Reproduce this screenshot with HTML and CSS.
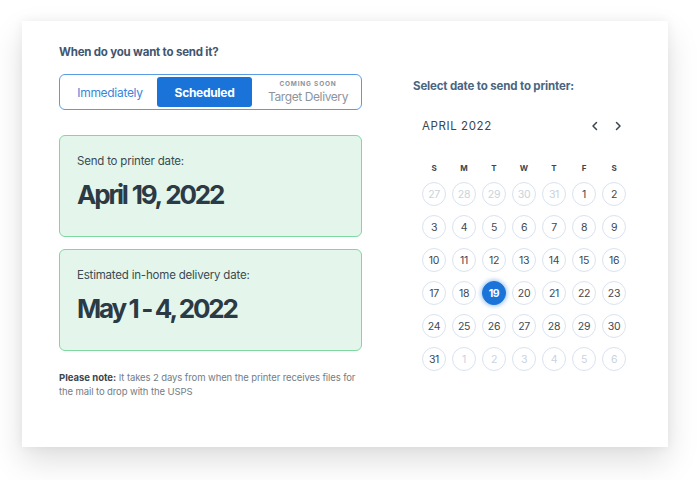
FILE: index.html
```html
<!DOCTYPE html>
<html>
<head>
<meta charset="utf-8">
<link rel="stylesheet" href="styles.css">
</head>
<body>
<div class="card">
  <div class="left">
    <h2 class="q">When do you want to send it?</h2>
    <div class="toggle">
      <div class="opt opt-imm">Immediately</div>
      <div class="opt opt-sel">Scheduled</div>
      <div class="opt opt-soon">
        <span class="soon">COMING SOON</span>
        <span class="target">Target Delivery</span>
      </div>
    </div>
    <div class="datebox">
      <div class="dl">Send to printer date:</div>
      <div class="dv">April 19, 2022</div>
    </div>
    <div class="datebox">
      <div class="dl">Estimated in-home delivery date:</div>
      <div class="dv dv-tight">May 1 - 4, 2022</div>
    </div>
    <p class="note"><b class="note-lead">Please note:</b> It takes 2 days from when the printer receives files for the mail to drop with the USPS</p>
  </div>
  <div class="right">
    <h2 class="sel-title">Select date to send to printer:</h2>
    <div class="cal">
      <div class="cal-head">
        <span class="month">APRIL 2022</span>
        <span class="arrows">
          <svg width="10" height="10" viewBox="0 0 10 10"><path d="M6.5 1.5 L3 5 L6.5 8.5" fill="none" stroke="#3a4650" stroke-width="1.5" stroke-linecap="round" stroke-linejoin="round"/></svg>
          <svg width="10" height="10" viewBox="0 0 10 10"><path d="M3.5 1.5 L7 5 L3.5 8.5" fill="none" stroke="#3a4650" stroke-width="1.5" stroke-linecap="round" stroke-linejoin="round"/></svg>
        </span>
      </div>
      <div class="grid">
        <span class="wd">S</span><span class="wd">M</span><span class="wd">T</span><span class="wd">W</span><span class="wd">T</span><span class="wd">F</span><span class="wd">S</span>
        <span class="d off">27</span><span class="d off">28</span><span class="d off">29</span><span class="d off">30</span><span class="d off">31</span><span class="d">1</span><span class="d">2</span>
        <span class="d">3</span><span class="d">4</span><span class="d">5</span><span class="d">6</span><span class="d">7</span><span class="d">8</span><span class="d">9</span>
        <span class="d">10</span><span class="d">11</span><span class="d">12</span><span class="d">13</span><span class="d">14</span><span class="d">15</span><span class="d">16</span>
        <span class="d">17</span><span class="d">18</span><span class="d on">19</span><span class="d">20</span><span class="d">21</span><span class="d">22</span><span class="d">23</span>
        <span class="d">24</span><span class="d">25</span><span class="d">26</span><span class="d">27</span><span class="d">28</span><span class="d">29</span><span class="d">30</span>
        <span class="d">31</span><span class="d off">1</span><span class="d off">2</span><span class="d off">3</span><span class="d off">4</span><span class="d off">5</span><span class="d off">6</span>
      </div>
    </div>
  </div>
</div>
</body>
</html>
```

FILE: styles.css
```css
* { box-sizing: border-box; }
html, body { margin: 0; padding: 0; background: #ffffff; }
body {
  width: 700px;
  height: 480px;
  overflow: hidden;
  font-family: "Inter", "Lato", sans-serif;
  color: #2d3b45;
}
.card {
  margin: 21px 0 0 22px;
  width: 646px;
  height: 426px;
  background: #fff;
  box-shadow: 0 14px 30px rgba(0, 0, 0, 0.13), 0 0 10px rgba(0, 0, 0, 0.06);
  display: flex;
  padding: 0 0 0 37px;
}
.left {
  width: 303px;
  display: flex;
  flex-direction: column;
  padding-top: 24px;
}
.q {
  margin: 0;
  font-size: 11.5px;
  font-weight: 700;
  color: #3f5670;
  line-height: 14px;
  letter-spacing: -0.2px;
}
.toggle {
  margin-top: 15px;
  height: 36px;
  border: 1px solid #5a9be6;
  border-radius: 6px;
  display: flex;
  align-items: center;
  padding: 2px 3px;
}
.opt { height: 100%; display: flex; align-items: center; justify-content: center; }
.opt-imm {
  width: 94px;
  color: #3a86dc;
  font-size: 12px;
  letter-spacing: -0.3px;
}
.opt-sel {
  width: 95px;
  background: #1a73d9;
  color: #fff;
  font-weight: 700;
  font-size: 12px;
  border-radius: 3px;
  letter-spacing: -0.3px;
}
.opt-soon {
  flex: 1;
  flex-direction: column;
  line-height: 1;
  padding-left: 6px;
}
.soon {
  font-size: 6.5px;
  font-weight: 700;
  letter-spacing: 0.8px;
  color: #8d959c;
  margin-bottom: 3px;
}
.target {
  font-size: 12px;
  color: #8d959c;
  letter-spacing: -0.4px;
}
.datebox {
  margin-top: 25px;
  height: 102px;
  background: #e4f6ec;
  border: 1px solid #7fd8a1;
  border-radius: 6px;
  padding: 18px 17px 0;
}
.datebox + .datebox { margin-top: 12px; }
.dl {
  font-size: 11.5px;
  color: #3c4a52;
  line-height: 14px;
  letter-spacing: -0.2px;
}
.dv {
  margin-top: 11px;
  font-size: 26px;
  font-weight: 700;
  color: #2b3a44;
  letter-spacing: -2.2px;
  word-spacing: 1px;
  line-height: 32px;
}
.dv-tight { word-spacing: -0.3px; }
.note {
  margin: 20px 0 0;
  font-size: 9.5px;
  line-height: 14px;
  color: #737d84;
  letter-spacing: -0.1px;
}
.note-lead { color: #3a464e; font-weight: 700; letter-spacing: 0; }
.right {
  margin-left: 51px;
  padding-top: 58px;
  width: 220px;
}
.sel-title {
  margin: 0;
  font-size: 11.5px;
  font-weight: 700;
  color: #4a6580;
  line-height: 14px;
  letter-spacing: -0.15px;
}
.cal { padding-left: 9px; margin-top: 25px; width: 213px; }
.cal-head {
  display: flex;
  align-items: center;
  justify-content: space-between;
  height: 16px;
}
.month {
  font-size: 11.5px;
  letter-spacing: 0.6px;
  color: #3a4650;
}
.arrows { display: flex; gap: 13px; padding-right: 3px; }
.arrows svg { display: block; }
.grid {
  margin-top: 29px;
  display: grid;
  grid-template-columns: repeat(7, 24px);
  column-gap: 6px;
  row-gap: 9px;
}
.wd {
  font-size: 8px;
  font-weight: 700;
  color: #3a4650;
  text-align: center;
  line-height: 10px;
}
.d {
  width: 24px;
  height: 24px;
  border-radius: 50%;
  border: 1px solid #d9e3ef;
  display: flex;
  align-items: center;
  justify-content: center;
  font-size: 10.5px;
  color: #3d4852;
  letter-spacing: -0.3px;
}
.d.off { color: #c9d3dd; }
.d.on {
  background: #1a73d9;
  border-color: #1a73d9;
  color: #fff;
  font-weight: 700;
  box-shadow: 0 0 4px 1px rgba(26, 115, 217, 0.45);
}
```
